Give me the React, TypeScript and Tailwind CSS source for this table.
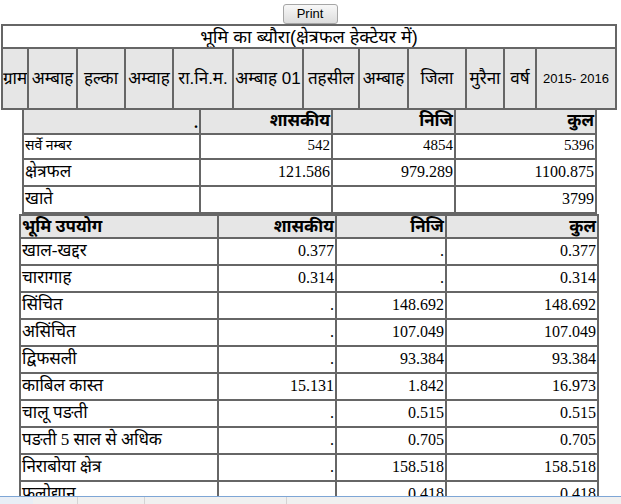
import React from "react";

const sans = "font-['Liberation_Sans','Mangal','Noto_Sans_Devanagari','Lohit_Devanagari','Noto_Sans',sans-serif]";
const serif = "font-['Liberation_Serif','Mangal','Noto_Sans_Devanagari','Lohit_Devanagari','Noto_Serif',serif]";

const topCells = [
  "ग्राम",
  "अम्बाह",
  "हल्का",
  "अम्वाह",
  "रा.नि.म.",
  "अम्बाह 01",
  "तहसील",
  "अम्बाह",
  "जिला",
  "मुरैना",
  "वर्ष",
  "2015- 2016",
];

const summaryRows = [
  { label: "सर्वे नम्बर", a: "542", b: "4854", c: "5396", small: true, h: "h-[25px]" },
  { label: "क्षेत्रफल", a: "121.586", b: "979.289", c: "1100.875", small: false, h: "h-[27px]" },
  { label: "खाते", a: "", b: "", c: "3799", small: false, h: "h-[27px]" },
];

const useRows = [
  ["खाल-खद्दर", "0.377", ".", "0.377"],
  ["चारागाह", "0.314", ".", "0.314"],
  ["सिंचित", ".", "148.692", "148.692"],
  ["असिंचित", ".", "107.049", "107.049"],
  ["द्विफसली", ".", "93.384", "93.384"],
  ["काबिल कास्त", "15.131", "1.842", "16.973"],
  ["चालू पङती", ".", "0.515", "0.515"],
  ["पङती 5 साल से अधिक", ".", "0.705", "0.705"],
  ["निराबोया क्षेत्र", ".", "158.518", "158.518"],
  ["फलोद्यान", ".", "0.418", "0.418"],
];

const cell = "border-r-2 border-b-2 border-[#666666] overflow-hidden whitespace-nowrap";

export default function App() {
  return (
    <div className="relative w-[621px] h-[504px] overflow-hidden bg-white text-black">
      {/* Print button */}
      <div className="flex justify-center pt-[4px] h-[24px]">
        <button
          className={`w-[55px] h-[20px] border border-[#a6a6a6] rounded-[3px] bg-gradient-to-b from-[#f8f8f8] to-[#dddddd] text-[13px] leading-[18px] text-black ${sans} ml-[-1px]`}
        >
          Print
        </button>
      </div>

      {/* Table 1 */}
      <div className={`ml-[1px] w-[616px] border-l-2 border-t-2 border-[#666666] ${sans}`}>
        <div className={`${cell} h-[23px] bg-white flex items-center justify-center text-[18px] leading-[21px] pt-[1px]`}>
          भूमि का ब्यौरा(क्षेत्रफल हेक्टेयर में)
        </div>
        <div className="grid grid-cols-[26px_49px_48px_48px_60px_70px_56px_49px_58px_38px_32px_80px]">
          {topCells.map((t, i) => (
            <div
              key={i}
              className={`${cell} h-[61px] bg-[#e6e6e6] flex items-center justify-center ${
                i === topCells.length - 1 ? "text-[13px]" : "text-[17px]"
              }`}
            >
              {t}
            </div>
          ))}
        </div>
      </div>

      {/* Table 2 */}
      <div className={`ml-[22px] w-[575px] border-l-2 border-[#666666] ${serif}`}>
        <div className="grid grid-cols-[177px_132px_123px_141px]">
          <div className={`${cell} h-[25px] bg-[#e6e6e6] flex items-end justify-end pr-[1px] text-[16px] font-bold leading-[20px]`}>.</div>
          <div className={`${cell} h-[25px] bg-[#e6e6e6] flex items-start justify-end pr-[1px] text-[17px] font-bold leading-[22px]`}>शासकीय</div>
          <div className={`${cell} h-[25px] bg-[#e6e6e6] flex items-start justify-end pr-[1px] text-[17px] font-bold leading-[22px]`}>निजि</div>
          <div className={`${cell} h-[25px] bg-[#e6e6e6] flex items-start justify-end pr-[1px] text-[17px] font-bold leading-[22px]`}>कुल</div>
          {summaryRows.map((r, i) => (
            <React.Fragment key={i}>
              <div
                className={`${cell} ${r.h} bg-white flex items-start justify-start pl-[1px] ${
                  r.small ? "text-[14px] leading-[19px] pt-[1px]" : "text-[17px] leading-[23px]"
                }`}
              >
                {r.label}
              </div>
              {[r.a, r.b, r.c].map((v, j) => (
                <div
                  key={j}
                  className={`${cell} ${r.h} bg-white flex items-start justify-end pr-[1px] ${
                    r.small ? "text-[15px] leading-[19px] pt-[1px]" : "text-[16px] leading-[23px]"
                  }`}
                >
                  {v}
                </div>
              ))}
            </React.Fragment>
          ))}
        </div>
      </div>

      {/* Table 3 */}
      <div className={`ml-[19px] w-[580px] border-l-2 border-t-2 border-[#666666] ${serif}`}>
        <div className="grid grid-cols-[198px_118px_110px_152px]">
          <div className={`${cell} h-[23px] bg-[#e6e6e6] flex items-start justify-start pl-[1px] text-[17px] font-bold leading-[22px]`}>भूमि उपयोग</div>
          <div className={`${cell} h-[23px] bg-[#e6e6e6] flex items-start justify-end pr-[1px] text-[17px] font-bold leading-[22px]`}>शासकीय</div>
          <div className={`${cell} h-[23px] bg-[#e6e6e6] flex items-start justify-end pr-[1px] text-[17px] font-bold leading-[22px]`}>निजि</div>
          <div className={`${cell} h-[23px] bg-[#e6e6e6] flex items-start justify-end pr-[1px] text-[17px] font-bold leading-[22px]`}>कुल</div>
          {useRows.map((r, i) => (
            <React.Fragment key={i}>
              <div className={`${cell} h-[27px] bg-white flex items-start justify-start pl-[1px] text-[17px] leading-[22px] pt-[1px]`}>
                {r[0]}
              </div>
              {r.slice(1).map((v, j) => (
                <div
                  key={j}
                  className={`${cell} h-[27px] bg-white flex items-start justify-end pr-[1px] text-[16px] leading-[22px] pt-[1px]`}
                >
                  {v}
                </div>
              ))}
            </React.Fragment>
          ))}
        </div>
      </div>

      {/* Overlapping window edge at bottom */}
      <div className="absolute left-0 right-0 top-[496px] h-[8px] border-t border-[#7ea6d6] bg-[#f0f0f0] flex">
        <div className="w-[33px] h-full bg-[#e8eef6]" />
        <div className="w-[45px] h-full border-r border-[#d4d4d4]" />
        <div className="w-[67px] h-full border-r border-[#d4d4d4]" />
        <div className="w-[142px] h-full border-r border-[#d4d4d4]" />
        <div className="flex-1 h-full" />
      </div>
    </div>
  );
}
